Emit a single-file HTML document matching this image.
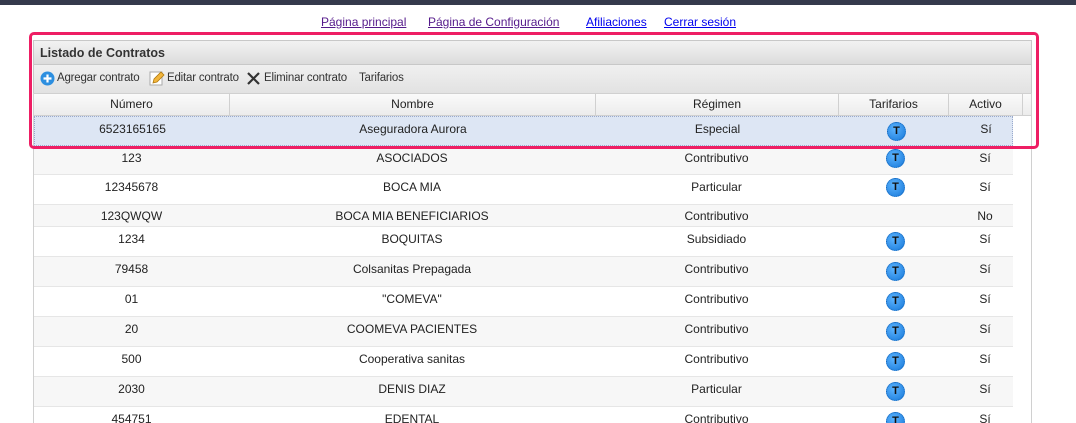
<!DOCTYPE html>
<html style="height:423px;overflow:hidden"><head><meta charset="utf-8"><style>
*{box-sizing:border-box;margin:0;padding:0}
body{width:1076px;height:423px;overflow:hidden;background:#fff;font-family:"Liberation Sans",sans-serif;font-size:12px;color:#222;position:relative}
.top{position:absolute;left:0;top:0;width:1076px;height:5px;background:#353a4c}
.nav a{position:absolute;top:15px;font-size:12px;text-decoration:underline}
.v{color:#551a8b}.b{color:#0000ee}
.panel{position:absolute;left:33px;top:40px;width:999px;height:383px;border:1px solid #d0d0d0;border-top:none;border-bottom:none}
.ph{position:absolute;left:33px;top:40px;width:999px;height:25px;background:linear-gradient(#f2f2f2,#dcdcdc);border:1px solid #c8c8c8;font-weight:bold;font-size:12.5px;color:#333;padding:5px 0 0 6px}
.tb{position:absolute;left:33px;top:65px;width:999px;height:28px;background:linear-gradient(#f0f0f0,#e2e2e2);border-left:1px solid #c8c8c8;border-right:1px solid #c8c8c8;font-size:11.5px;color:#333;letter-spacing:-0.2px}
.tb span{position:absolute;top:7px}
.hd{position:absolute;left:33px;top:93px;width:999px;height:23px;background:linear-gradient(#fafafa,#ececec);border:1px solid #d0d0d0}
.hd div{position:absolute;top:0;height:21px;line-height:21px;text-align:center;border-right:1px solid #d0d0d0;color:#222}
.row{position:absolute;left:34px;width:979px;border-bottom:1px solid #e6e6e6}
.row div{position:absolute;top:5px;text-align:center}
.sel{background:#dde6f4;border:1px dotted #9aaacc}
.g{background:#f7f7f7}
.ic{position:absolute;width:19px;height:19px;border-radius:50%;background:radial-gradient(circle at 40% 35%,#5cb4ff,#1778d8);border:1px dotted #1466bb;color:#111;font-weight:bold;font-size:11px;line-height:17px;text-align:center}
.red{position:absolute;left:29px;top:32px;width:1010px;height:117px;border:3px solid #ee1e64;border-radius:5px}
</style></head><body>
<div class="top"></div>
<div class="nav"><a class="v" style="left:321px">Página principal</a><a class="v" style="left:428px">Página de Configuración</a><a class="b" style="left:586px">Afiliaciones</a><a class="b" style="left:664px">Cerrar sesión</a></div>
<div class="panel"></div>
<div class="ph">Listado de Contratos</div>
<div class="tb">
<svg style="position:absolute;left:6px;top:6px" width="15" height="15"><circle cx="7.5" cy="7.5" r="7" fill="#2d8fe0"/><path d="M7.5 3.5v8M3.5 7.5h8" stroke="#fff" stroke-width="2.2"/></svg>
<span style="left:23px">Agregar contrato</span>
<svg style="position:absolute;left:115px;top:5px" width="16" height="16"><rect x="1" y="2" width="12" height="13" fill="#fff" stroke="#aaa"/><path d="M4 13l1-4 7-7 3 3-7 7z" fill="#f2b53c" stroke="#b07a10" stroke-width=".8"/></svg>
<span style="left:133px">Editar contrato</span>
<svg style="position:absolute;left:213px;top:7px" width="13" height="13"><path d="M1 1l11 11M12 1L1 12" stroke="#333" stroke-width="2.2"/></svg>
<span style="left:230px">Eliminar contrato</span>
<span style="left:325px">Tarifarios</span>
</div>
<div class="hd">
<div style="left:0;width:196px">Número</div>
<div style="left:196px;width:366px">Nombre</div>
<div style="left:562px;width:243px">Régimen</div>
<div style="left:805px;width:110px">Tarifarios</div>
<div style="left:915px;width:74px">Activo</div>
</div>
<div class="row sel" style="top:116px;height:30px"><div style="left:0;width:195px">6523165165</div><div style="left:195px;width:366px">Aseguradora Aurora</div><div style="left:561px;width:243px">Especial</div><span class="ic" style="left:852px;top:5px">T</span><div style="left:914px;width:74px">Sí</div></div>
<div class="row g" style="top:146px;height:29px"><div style="left:0;width:195px">123</div><div style="left:195px;width:366px">ASOCIADOS</div><div style="left:561px;width:243px">Contributivo</div><span class="ic" style="left:852px;top:3px">T</span><div style="left:914px;width:74px">Sí</div></div>
<div class="row" style="top:175px;height:30px"><div style="left:0;width:195px">12345678</div><div style="left:195px;width:366px">BOCA MIA</div><div style="left:561px;width:243px">Particular</div><span class="ic" style="left:852px;top:3px">T</span><div style="left:914px;width:74px">Sí</div></div>
<div class="row g" style="top:205px;height:22px"><div style="left:0;width:195px;top:4px">123QWQW</div><div style="left:195px;width:366px;top:4px">BOCA MIA BENEFICIARIOS</div><div style="left:561px;width:243px;top:4px">Contributivo</div><div style="left:914px;width:74px;top:4px">No</div></div>
<div class="row" style="top:227px;height:30px"><div style="left:0;width:195px">1234</div><div style="left:195px;width:366px">BOQUITAS</div><div style="left:561px;width:243px">Subsidiado</div><span class="ic" style="left:852px;top:5px">T</span><div style="left:914px;width:74px">Sí</div></div>
<div class="row g" style="top:257px;height:30px"><div style="left:0;width:195px">79458</div><div style="left:195px;width:366px">Colsanitas Prepagada</div><div style="left:561px;width:243px">Contributivo</div><span class="ic" style="left:852px;top:5px">T</span><div style="left:914px;width:74px">Sí</div></div>
<div class="row" style="top:287px;height:30px"><div style="left:0;width:195px">01</div><div style="left:195px;width:366px">"COMEVA"</div><div style="left:561px;width:243px">Contributivo</div><span class="ic" style="left:852px;top:5px">T</span><div style="left:914px;width:74px">Sí</div></div>
<div class="row g" style="top:317px;height:30px"><div style="left:0;width:195px">20</div><div style="left:195px;width:366px">COOMEVA PACIENTES</div><div style="left:561px;width:243px">Contributivo</div><span class="ic" style="left:852px;top:5px">T</span><div style="left:914px;width:74px">Sí</div></div>
<div class="row" style="top:347px;height:30px"><div style="left:0;width:195px">500</div><div style="left:195px;width:366px">Cooperativa sanitas</div><div style="left:561px;width:243px">Contributivo</div><span class="ic" style="left:852px;top:5px">T</span><div style="left:914px;width:74px">Sí</div></div>
<div class="row g" style="top:377px;height:30px"><div style="left:0;width:195px">2030</div><div style="left:195px;width:366px">DENIS DIAZ</div><div style="left:561px;width:243px">Particular</div><span class="ic" style="left:852px;top:5px">T</span><div style="left:914px;width:74px">Sí</div></div>
<div class="row" style="top:407px;height:16px;border-bottom:none"><div style="left:0;width:195px">454751</div><div style="left:195px;width:366px">EDENTAL</div><div style="left:561px;width:243px">Contributivo</div><span class="ic" style="left:852px;top:5px">T</span><div style="left:914px;width:74px">Sí</div></div>
<div class="red"></div>
</body></html>
